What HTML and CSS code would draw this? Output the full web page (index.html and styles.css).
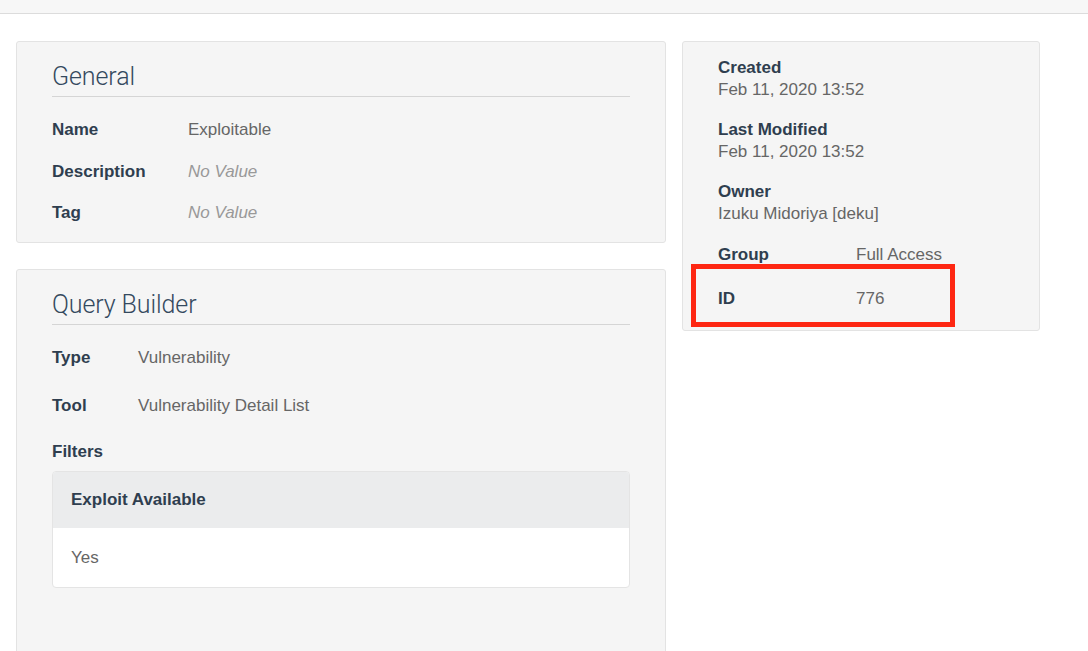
FILE: index.html
```html
<!DOCTYPE html>
<html>
<head>
<meta charset="utf-8">
<link rel="stylesheet" href="styles.css">
</head>
<body>
<div class="topbar"></div>
<div class="page">
  <div class="col-left">
    <section class="card">
      <h2 class="card-title">General</h2>
      <div class="rows rows-general">
        <div class="row"><span class="label">Name</span><span class="value">Exploitable</span></div>
        <div class="row"><span class="label">Description</span><span class="value empty">No Value</span></div>
        <div class="row"><span class="label">Tag</span><span class="value empty">No Value</span></div>
      </div>
    </section>
    <section class="card card-query">
      <h2 class="card-title">Query Builder</h2>
      <div class="rows rows-query">
        <div class="row"><span class="label">Type</span><span class="value">Vulnerability</span></div>
        <div class="row"><span class="label">Tool</span><span class="value">Vulnerability Detail List</span></div>
        <div class="row row-filters"><span class="label">Filters</span></div>
      </div>
      <div class="filter">
        <div class="filter-head">Exploit Available</div>
        <div class="filter-body">Yes</div>
      </div>
    </section>
  </div>
  <aside class="card card-meta">
    <div class="meta-item"><div class="label">Created</div><div class="value">Feb 11, 2020 13:52</div></div>
    <div class="meta-item"><div class="label">Last Modified</div><div class="value">Feb 11, 2020 13:52</div></div>
    <div class="meta-item"><div class="label">Owner</div><div class="value">Izuku Midoriya [deku]</div></div>
    <div class="meta-row meta-group"><span class="label">Group</span><span class="value">Full Access</span></div>
    <div class="meta-row meta-id"><span class="label">ID</span><span class="value">776</span></div>
    <div class="highlight"></div>
  </aside>
</div>
</body>
</html>
```
FILE: styles.css
```css
* { box-sizing: border-box; }
html, body { margin: 0; padding: 0; background: #fff; }
body {
  font-family: "Liberation Sans", Arial, sans-serif;
  font-size: 17px;
  color: #666;
  overflow: hidden;
  height: 651px;
}
.topbar {
  height: 14px;
  background: #f7f7f7;
  border-bottom: 1px solid #dcdcdc;
}
.page {
  display: flex;
  align-items: flex-start;
  gap: 16px;
  padding: 27px 0 0 16px;
}
.col-left {
  width: 650px;
  display: flex;
  flex-direction: column;
  gap: 26px;
}
.card {
  background: #f5f5f5;
  border: 1px solid #e3e3e3;
  border-radius: 3px;
  padding: 18px 35px 17px 35px;
}
.card-title {
  margin: 0;
  font-family: Roboto, "Liberation Sans", sans-serif;
  font-weight: 300;
  font-size: 25px;
  line-height: 34px;
  color: #34495e;
  padding-bottom: 2px;
  border-bottom: 1px solid #d5d5d5;
  letter-spacing: -0.1px;
}
.rows { display: flex; flex-direction: column; padding-top: 21px; }
.row { display: flex; line-height: 24px; }
.rows-general { gap: 17.5px; }
.rows-query { gap: 24px; }
.rows-query .row-filters { margin-top: -2px; }
.label { color: #2f3e4f; font-weight: bold; }
.rows-general .label { width: 136px; }
.rows-query .label { width: 86px; }
.value { color: #666; }
.value.empty { color: #999; font-style: italic; }
.card-query { height: 420px; }
.filter {
  margin-top: 7px;
  border: 1px solid #e4e4e4;
  border-radius: 4px;
  overflow: hidden;
  background: #fff;
}
.filter-head {
  background: #ebeced;
  height: 56px;
  line-height: 56px;
  padding-left: 18px;
  font-weight: bold;
  color: #2f3e4f;
}
.filter-body {
  height: 59px;
  line-height: 59px;
  padding-left: 18px;
  color: #666;
}
.card-meta {
  position: relative;
  width: 358px;
  padding: 15px 35px 20px 35px;
}
.meta-item { line-height: 22px; }
.meta-item + .meta-item { margin-top: 18px; }
.meta-row { display: flex; line-height: 22px; }
.meta-row .label { width: 138px; }
.meta-group { margin-top: 19px; }
.meta-id { margin-top: 22px; }
.highlight {
  position: absolute;
  left: 8px;
  top: 222px;
  width: 264px;
  height: 63px;
  border: 5px solid #fe2712;
}
```
